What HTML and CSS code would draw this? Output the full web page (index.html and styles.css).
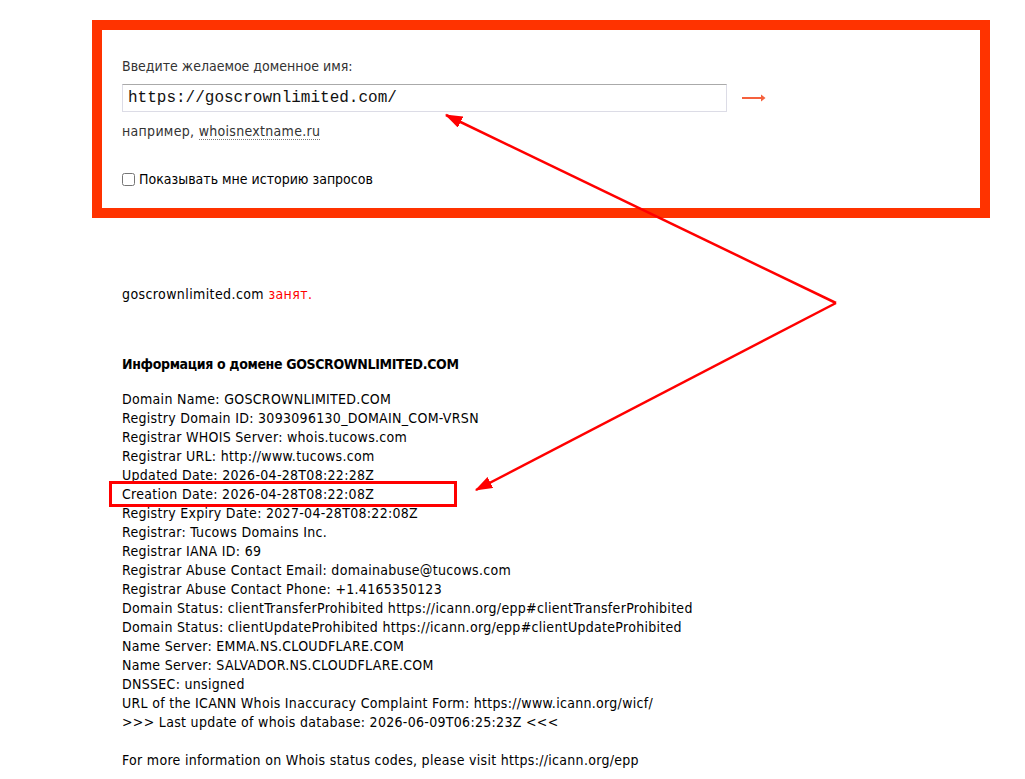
FILE: index.html
```html
<!DOCTYPE html>
<html lang="ru">

<head>
    <meta charset="UTF-8">
    <meta name="viewport" content="width=device-width, initial-scale=1.0">
    <title>Whois</title>
    <link rel="stylesheet" href="styles.css">
</head>

<body>
    <div class="pagina">
        <form class="buscador" action="#" method="get">
            <label for="domain" class="etiqueta">Введите желаемое доменное имя:</label>
            <div class="fila">
                <input type="text" id="domain" name="domain" value="https://goscrownlimited.com/">
                <button type="submit" class="enviar" aria-label="→">
                    <svg width="24" height="10" viewBox="0 0 24 10">
                        <path d="M0 5 H21" stroke="#f5613d" stroke-width="2"></path>
                        <path d="M19 1.5 L23.5 5 L19 8.5 z" fill="#f5613d"></path>
                    </svg>
                </button>
            </div>
            <div class="ejemplo">например, <a href="#">whoisnextname.ru</a></div>
            <label class="historial"><input type="checkbox"> Показывать мне историю запросов</label>
        </form>

        <div class="resultado">
            <p class="estado">goscrownlimited.com <span class="ocupado">занят.</span></p>
            <h3>Информация о домене GOSCROWNLIMITED.COM</h3>
            <div class="whois">Domain Name: GOSCROWNLIMITED.COM
Registry Domain ID: 3093096130_DOMAIN_COM-VRSN
Registrar WHOIS Server: whois.tucows.com
Registrar URL: http://www.tucows.com
Updated Date: 2026-04-28T08:22:28Z
Creation Date: 2026-04-28T08:22:08Z
Registry Expiry Date: 2027-04-28T08:22:08Z
Registrar: Tucows Domains Inc.
Registrar IANA ID: 69
Registrar Abuse Contact Email: domainabuse@tucows.com
Registrar Abuse Contact Phone: +1.4165350123
Domain Status: clientTransferProhibited https://icann.org/epp#clientTransferProhibited
Domain Status: clientUpdateProhibited https://icann.org/epp#clientUpdateProhibited
Name Server: EMMA.NS.CLOUDFLARE.COM
Name Server: SALVADOR.NS.CLOUDFLARE.COM
DNSSEC: unsigned
URL of the ICANN Whois Inaccuracy Complaint Form: https://www.icann.org/wicf/
&gt;&gt;&gt; Last update of whois database: 2026-06-09T06:25:23Z &lt;&lt;&lt;

For more information on Whois status codes, please visit https://icann.org/epp</div>
        </div>
    </div>

    <!-- flechas de la captura -->
    <svg class="notas" width="1025" height="779" viewBox="0 0 1025 779">
        <defs>
            <marker id="punta" viewBox="0 0 14 10" refX="13" refY="5" markerWidth="7" markerHeight="5" orient="auto">
                <path d="M0 0 L14 5 L0 10 z" fill="#f00"></path>
            </marker>
        </defs>
        <path d="M836 303 L446 115" stroke="#f00" stroke-width="2.5" fill="none" marker-end="url(#punta)"></path>
        <path d="M836 303 L476 490" stroke="#f00" stroke-width="2.5" fill="none" marker-end="url(#punta)"></path>
        <rect x="110.5" y="482.5" width="345" height="23" stroke="#f00" stroke-width="3" fill="none"></rect>
    </svg>
</body>

</html>
```

FILE: styles.css
```css
* {
    padding: 0;
    margin: 0;
    box-sizing: border-box;
}

body {
    font-family: "DejaVu Sans Condensed", "DejaVu Sans", sans-serif;
    font-size: 14px;
    line-height: 19px;
    color: #000;
    background: #fff;
}

.pagina {
    padding-top: 20px;
}

.buscador {
    margin-left: 92px;
    width: 898px;
    border: 10px solid #ff3300;
    padding: 27px 20px 19px;
    display: flex;
    flex-direction: column;
}

.etiqueta {
    color: #333;
}

.fila {
    display: flex;
    align-items: center;
    margin-top: 8px;
}

.fila input[type="text"] {
    width: 605px;
    height: 28px;
    border: 1px solid #dcdce6;
    border-top-color: #aaa;
    padding: 0 5px;
    font-family: "Liberation Mono", monospace;
    font-size: 16px;
    color: #111;
    outline: none;
}

.enviar {
    border: none;
    background: none;
    margin-left: 15px;
    display: flex;
    align-items: center;
    cursor: pointer;
}

.ejemplo {
    margin-top: 10px;
    color: #333;
    letter-spacing: 0.3px;
}

.ejemplo a {
    color: #333;
    text-decoration: none;
    border-bottom: 1px dotted #777;
}

.historial {
    margin-top: 29px;
    display: flex;
    align-items: center;
    color: #000;
}

.historial input {
    width: 13px;
    height: 13px;
    margin-right: 4px;
}

.resultado {
    margin-left: 122px;
}

.estado {
    margin-top: 67px;
    letter-spacing: 0.4px;
}

.ocupado {
    color: #f00;
}

h3 {
    font-size: 14px;
    margin-top: 51px;
    letter-spacing: -0.35px;
}

.whois {
    white-space: pre-line;
    margin-top: 16px;
    letter-spacing: 0.3px;
}

.notas {
    position: absolute;
    top: 0;
    left: 0;
    pointer-events: none;
}
```
